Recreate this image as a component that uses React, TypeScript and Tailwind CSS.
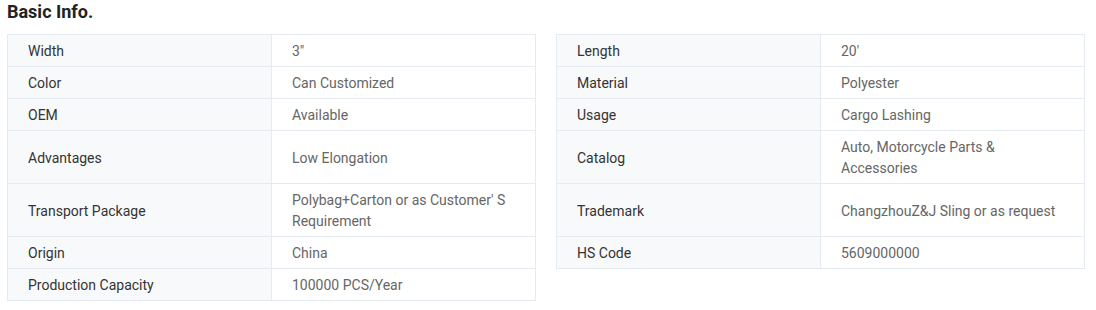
type Pair = [string, string] | null

const rows: [Pair, Pair][] = [
  [['Width', '3″'], ['Length', '20′']],
  [['Color', 'Can Customized'], ['Material', 'Polyester']],
  [['OEM', 'Available'], ['Usage', 'Cargo Lashing']],
  [['Advantages', 'Low Elongation'], ['Catalog', 'Auto, Motorcycle Parts & Accessories']],
  [['Transport Package', "Polybag+Carton or as Customer' S Requirement"], ['Trademark', 'ChangzhouZ&J Sling or as request']],
  [['Origin', 'China'], ['HS Code', '5609000000']],
  [['Production Capacity', '100000 PCS/Year'], null],
]

const keyCell = 'border border-[#e6eaf1] bg-[#f8f9fb] px-5 pt-[6px] pb-[4px] text-[14px] leading-[21px] text-[#333]'
const valCell = 'border border-[#e6eaf1] px-5 pt-[6px] pb-[4px] text-[14px] leading-[21px] text-[#666]'

function Cells({ pair }: { pair: Pair }) {
  if (!pair) {
    return (
      <>
        <td />
        <td />
      </>
    )
  }
  return (
    <>
      <td className={keyCell}>{pair[0]}</td>
      <td className={valCell}>{pair[1]}</td>
    </>
  )
}

export default function App() {
  return (
    <div className="bg-white w-[1096px] h-[310px] pl-[7px] pt-[1px] font-['Roboto',sans-serif]">
      <h2 className="text-[18px] leading-[22px] font-bold text-[#222]">Basic Info.</h2>
      <table className="mt-[11px] w-[1078px] border-collapse table-fixed">
        <colgroup>
          <col className="w-[264px]" />
          <col className="w-[264px]" />
          <col className="w-[21px]" />
          <col className="w-[264px]" />
          <col className="w-[264px]" />
        </colgroup>
        <tbody>
          {rows.map(([l, r], i) => (
            <tr key={i}>
              <Cells pair={l} />
              <td />
              <Cells pair={r} />
            </tr>
          ))}
        </tbody>
      </table>
    </div>
  )
}
